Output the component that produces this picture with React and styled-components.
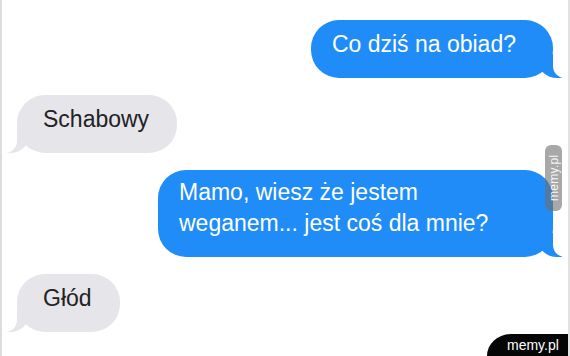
import React from "react";
import styled, { createGlobalStyle } from "styled-components";

const GlobalStyle = createGlobalStyle`
  html, body {
    margin: 0;
    padding: 0;
    background: #ffffff;
  }
`;

const Frame = styled.div`
  position: relative;
  box-sizing: border-box;
  width: 570px;
  height: 356px;
  overflow: hidden;
  background: #ffffff;
  border-left: 2px solid #dcdcdc;
  border-right: 2px solid #e2e2e2;
  font-family: "Liberation Sans", Arial, sans-serif;
`;

const Thread = styled.div`
  display: flex;
  flex-direction: column;
  gap: 17px;
  padding: 20px 15px 0 15px;
`;

const Bubble = styled.div`
  position: relative;
  box-sizing: border-box;
  align-self: ${(p) => (p.$me ? "flex-end" : "flex-start")};
  width: ${(p) => (p.$width ? `${p.$width}px` : "auto")};
  padding: ${(p) => (p.$me ? "0 37px 0 21px" : "0 28px 0 26px")};
  padding-top: ${(p) => (p.$multi ? "7px" : "9px")};
  padding-bottom: 18px;
  border-radius: 28px;
  background: ${(p) => (p.$me ? "#1f8cf8" : "#e5e5ea")};
  color: ${(p) => (p.$me ? "#ffffff" : "#222222")};
  font-size: 23px;
  line-height: 31px;
  white-space: nowrap;

  &::before {
    content: "";
    position: absolute;
    bottom: 0;
    height: 24px;
    width: 24px;
    background: ${(p) => (p.$me ? "#1f8cf8" : "#e5e5ea")};
    ${(p) =>
      p.$me
        ? "right: -9px; border-bottom-left-radius: 19px 17px;"
        : "left: -12px; border-bottom-right-radius: 19px 17px;"}
  }

  &::after {
    content: "";
    position: absolute;
    bottom: 0;
    height: 24px;
    width: 15px;
    background: #ffffff;
    ${(p) =>
      p.$me
        ? "right: -15px; border-bottom-left-radius: 12px;"
        : "left: -15px; border-bottom-right-radius: 12px;"}
  }
`;

const SideMark = styled.div`
  position: absolute;
  top: 145px;
  right: 6px;
  width: 17px;
  height: 66px;
  border-radius: 6px;
  background: rgba(110, 110, 110, 0.6);
  color: rgba(255, 255, 255, 0.92);
  font-size: 12px;
  display: flex;
  align-items: center;
  justify-content: center;
  writing-mode: vertical-rl;
  transform: rotate(180deg);
  letter-spacing: 0.3px;
`;

const CornerMark = styled.div`
  position: absolute;
  right: -2px;
  bottom: 0;
  box-sizing: border-box;
  width: 83px;
  height: 22px;
  padding-left: 20px;
  background: #050505;
  border-top-left-radius: 24px 22px;
  color: #ffffff;
  font-size: 14px;
  line-height: 22px;
`;

const messages = [
  { me: true, lines: ["Co dziś na obiad?"] },
  { me: false, lines: ["Schabowy"] },
  { me: true, width: 395, lines: ["Mamo, wiesz że jestem", "weganem... jest coś dla mnie?"] },
  { me: false, lines: ["Głód"] },
];

export default function App() {
  return (
    <>
      <GlobalStyle />
      <Frame>
        <Thread>
          {messages.map((m, i) => (
            <Bubble key={i} $me={m.me} $width={m.width} $multi={m.lines.length > 1}>
              {m.lines.map((l, j) => (
                <div key={j}>{l}</div>
              ))}
            </Bubble>
          ))}
        </Thread>
        <SideMark>memy.pl</SideMark>
        <CornerMark>memy.pl</CornerMark>
      </Frame>
    </>
  );
}
